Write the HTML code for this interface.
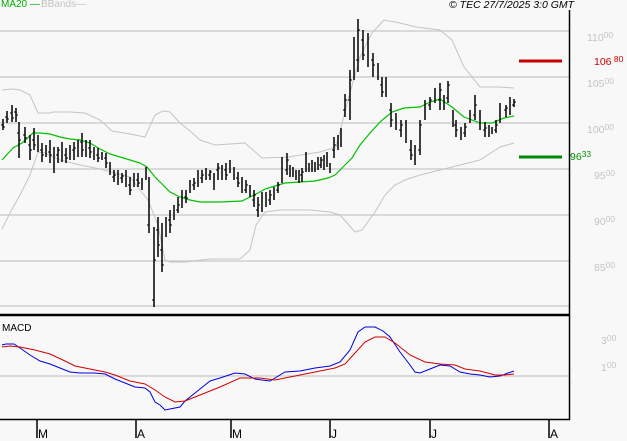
<!DOCTYPE html>
<html><head><meta charset="utf-8">
<style>
html,body{margin:0;padding:0;background:#f8f8f8;}
body{width:627px;height:440px;position:relative;overflow:hidden;font-family:"Liberation Sans",sans-serif;}
.t{position:absolute;white-space:nowrap;}
.lab{position:absolute;color:#c4c4c4;font-size:10.5px;line-height:12px;white-space:nowrap;}
.lab sup{font-size:8.5px;vertical-align:0;position:relative;top:-3px;}
.m{position:absolute;font-size:12px;line-height:12px;color:#000;}
</style></head><body>
<svg width="627" height="440" style="position:absolute;left:0;top:0" xmlns="http://www.w3.org/2000/svg">
<g stroke="#c8c8c8" stroke-width="1.3">
<line x1="0" y1="31" x2="569" y2="31"/><line x1="0" y1="77" x2="569" y2="77"/>
<line x1="0" y1="123" x2="569" y2="123"/><line x1="0" y1="169" x2="569" y2="169"/>
<line x1="0" y1="215" x2="569" y2="215"/><line x1="0" y1="261" x2="569" y2="261"/>
<line x1="0" y1="306" x2="569" y2="306"/><line x1="0" y1="376" x2="569" y2="376"/>
</g>
<g fill="none" stroke="#c4c4c4" stroke-width="1">
<polyline points="2,90 13,89 20,90 30,95 38,113 50,113 53,112 70,112 85,113 100,120 112,131 130,134 145,137 155,115 163,111 170,112 180,123 190,131 200,140 215,145 230,144 245,143 253,150 262,158 288,157 320,152 336,147 348,100 360,57 372,33 384,20 400,23 416,27 440,30 452,40 464,67 480,87 500,87 514,88"/>
<polyline points="2,229 10,213 20,195 30,175 38,152 45,153 60,160 80,165 100,169 130,177 140,190 148,200 158,225 165,260 170,262 185,262 210,259 240,259 250,250 256,225 265,212 280,210 310,210 330,212 340,215 355,232 362,230 375,212 385,195 395,185 405,180 420,175 440,170 460,165 480,160 500,147 514,143"/>
</g>
<polyline fill="none" stroke="#00c000" stroke-width="1.2" points="2,160 13,148 22,143 33,133 40,133 50,134 60,137 70,139 80,140 90,143 100,149 110,154 120,157 130,160 140,163 147,167 155,177 163,185 170,192 180,197 190,200 200,202 220,202 242,201 250,197 258,193 265,189 275,186 285,183 300,182 315,181 328,178 335,175 345,165 352,158 360,145 370,133 380,122 392,112 404,108 420,107 430,102 440,99 452,107 464,117 480,123 492,123 504,118 514,116"/>
<g stroke="#000" stroke-width="1.5" fill="none">
<path d="
M3 119V130M7 111V123M12 105V122M16 108V122M19 122V158M25 127V143M30 135V160M34 128V150M38 135V152M42 143V162M46 145V157M50 140V163M54 147V173M58 147V163M62 142V162M66 148V163M70 145V160M74 142V160M78 140V157M82 133V157M86 140V157M90 140V158M94 147V160M98 148V162M102 152V160M106 153V168M110 162V175M114 170V182M118 170V185M122 173V183M126 170V187M130 177V195M134 173V187M138 173V187M142 178V190M146 167V180M149 177V233M154 227V307M158 217V257M162 223V272M166 217V237M170 210V233M174 205V220M178 197V213M182 190V208M186 190V203M190 180V193M194 178V190M198 170V187M202 170V183M206 168V180M210 170V180M214 173V190M218 163V180M222 165V180M226 163V180M230 160V173M234 167V180M238 172V187M242 177V193M246 180V193M250 185V197M254 190V207M258 197V217M262 192V212M266 192V207M270 190V205M274 187V200M278 182V193
M282 157V183M287 153V175M290 165V177M293 167V177M296 170V180M299 170V183M302 168V182M306 152V172M309 163V172M312 160V172M315 162V172M318 157V170M321 157V168M324 155V170M327 152V167M330 163V173M334 137V158M338 135V150M341 128V147M345 94V117M350 70V120M354 37V80M358 19V72M363 30V60M368 33V67M373 53V77M378 63V80M382 77V97M386 77V97M391 103V127M396 113V130M401 120V137M406 120V143M411 140V160M415 145V165M420 120V155M425 100V120M430 97V110M435 88V103M440 83V110M444 95V110M448 81V103M453 110V127M456 120V137M461 127V140M465 123V137M470 110V123M475 95V120M480 110V130M485 122V137M489 125V137M492 127V134M496 120V133M500 103V123M506 105V117M510 97V115M514 99V107"/>
<path stroke-width="1" d="M1 125h2M3 127h2M5 117h2M7 119h2M10 113h2M12 118h2M14 112h2M16 115h2M17 133h2M19 140h2M23 135h2M25 138h2M28 145h2M30 150h2M32 140h2M34 145h2M40 150h2M42 155h2M48 152h2M50 155h2M56 155h2M58 150h2M64 155h2M66 158h2M72 150h2M74 148h2M80 142h2M82 150h2M88 148h2M90 152h2M96 155h2M98 158h2M104 158h2M106 163h2M112 177h2M114 175h2M120 178h2M122 176h2M128 185h2M130 190h2M136 180h2M138 183h2M147 225h2M152 300h2M154 260h2M156 230h2M158 245h2M160 250h2M162 265h2M168 220h2M170 225h2M176 210h2M178 205h2M184 197h2M186 198h2M192 185h2M194 183h2M200 178h2M202 175h2M208 175h2M210 172h2M216 170h2M218 168h2M224 170h2M226 175h2M236 178h2M238 183h2M244 190h2M246 185h2M252 200h2M254 195h2M256 210h2M258 205h2M268 200h2M270 195h2M276 190h2M278 185h2M285 170h2M287 160h2M300 175h2M302 172h2M319 165h2M321 160h2M332 150h2M334 145h2M343 110h2M345 100h2M348 100h2M350 80h2M356 60h2M358 30h2M361 40h2M363 55h2M371 60h2M373 65h2M380 85h2M382 92h2M389 110h2M391 120h2M399 130h2M401 125h2M409 150h2M411 155h2M418 150h2M420 125h2M428 105h2M430 100h2M438 100h2M440 90h2M446 98h2M448 85h2M454 125h2M456 130h2M463 133h2M465 127h2M473 115h2M475 105h2M483 130h2M485 128h2M494 130h2M496 125h2M504 110h2M506 108h2M512 105h2M514 102h2"/>
</g>
<line x1="519" y1="61" x2="562" y2="61" stroke="#c80000" stroke-width="3"/>
<line x1="519" y1="157" x2="562" y2="157" stroke="#008c00" stroke-width="3"/>
<polyline fill="none" stroke="#0000e0" stroke-width="1" points="2,345 6,344 14,344 20,348 30,355 40,361 50,364 60,368 70,372 80,373 95,373 105,374 115,379 125,383 135,387 145,388 150,392 155,402 160,405 165,410 170,409 180,407 185,401 195,393 210,381 220,378 235,373 245,374 255,379 262,380 270,381 285,372 300,371 315,368 330,366 340,362 350,350 358,332 365,327 375,327 383,331 390,337 400,352 410,365 415,372 420,373 430,369 440,365 450,366 460,372 470,374 480,375 490,377 500,376 508,373 514,371"/>
<polyline fill="none" stroke="#d00000" stroke-width="1" points="2,347 10,346 20,347 35,350 50,354 65,361 75,366 90,369 105,372 115,375 130,381 145,384 155,390 165,397 175,402 185,401 200,395 220,387 240,378 260,378 275,380 295,376 315,372 335,368 345,364 355,353 365,342 375,337 385,337 395,343 410,355 425,362 440,364 455,365 465,369 480,371 495,375 505,375 514,374"/>
<line x1="569.5" y1="10" x2="569.5" y2="420" stroke="#000" stroke-width="1.5"/>
<line x1="0" y1="315" x2="570" y2="315" stroke="#000" stroke-width="2.5"/>
<line x1="0" y1="419.5" x2="570" y2="419.5" stroke="#000" stroke-width="1.5"/>
<g stroke="#000" stroke-width="1.5">
<line x1="37" y1="419" x2="37" y2="438"/><line x1="136" y1="419" x2="136" y2="438"/>
<line x1="231" y1="419" x2="231" y2="438"/><line x1="330" y1="419" x2="330" y2="438"/>
<line x1="430" y1="419" x2="430" y2="438"/><line x1="549" y1="419" x2="549" y2="438"/>
</g>
</svg>
<div class="t" style="left:1px;top:0px;font-size:10px;line-height:10px;color:#00b000">MA20 —</div>
<div class="t" style="left:41px;top:0px;font-size:10px;line-height:10px;color:#c4c4c4">BBands—</div>
<div class="t" style="left:449px;top:0px;font-size:10.5px;line-height:10px;font-style:italic;color:#000">© TEC 27/7/2025 3:0 GMT</div>
<div class="lab" style="left:587px;top:32px">110<sup>00</sup></div>
<div class="lab" style="left:587px;top:78px">105<sup>00</sup></div>
<div class="lab" style="left:587px;top:124px">100<sup>00</sup></div>
<div class="lab" style="left:594px;top:170px">95<sup>00</sup></div>
<div class="lab" style="left:594px;top:216px">90<sup>00</sup></div>
<div class="lab" style="left:594px;top:262px">85<sup>00</sup></div>
<div class="lab" style="left:601px;top:335px">3<sup>00</sup></div>
<div class="lab" style="left:601px;top:362px">1<sup>00</sup></div>
<div class="lab" style="left:594px;top:56px;color:#c80000">106<sup> 80</sup></div>
<div class="lab" style="left:570px;top:151px;color:#009000">96<sup>33</sup></div>
<div class="t" style="left:2px;top:324px;font-size:10px;line-height:10px;color:#000">MACD</div>
<div class="m" style="left:38px;top:428px">M</div>
<div class="m" style="left:137px;top:428px">A</div>
<div class="m" style="left:232px;top:428px">M</div>
<div class="m" style="left:331px;top:428px">J</div>
<div class="m" style="left:431px;top:428px">J</div>
<div class="m" style="left:550px;top:428px">A</div>
</body></html>
